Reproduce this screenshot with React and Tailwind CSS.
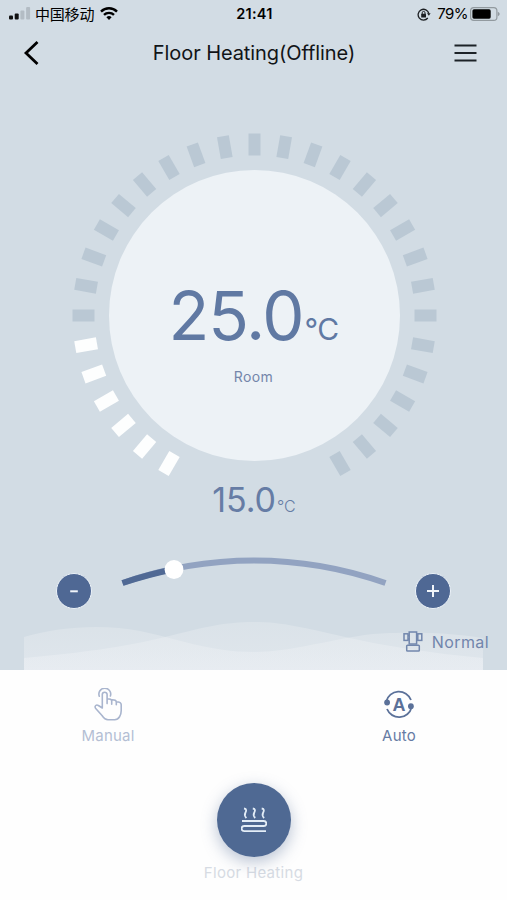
import React from 'react';

const ticks = Array.from({ length: 31 }, (_, i) => -150 + i * 10);

const StatusBar = () => (
    <div className="grid grid-cols-3 items-center h-7 pl-[9px] pr-[7px] text-black">
        <div className="flex items-center pb-px">
            <svg className="w-[22px] h-[13px]" viewBox="0 0 22 13">
                <rect x="0" y="8.5" width="4" height="4" rx="1" fill="#111" />
                <rect x="5.7" y="6.5" width="4" height="6" rx="1" fill="#111" />
                <rect x="11.4" y="3.5" width="4" height="9" rx="1" fill="#b3bcc4" />
                <rect x="17.1" y="0" width="4" height="12.5" rx="1" fill="#b3bcc4" />
            </svg>
            <span className="ml-1 text-[15px] leading-5 tracking-[-0.2px] whitespace-nowrap font-['Noto_Sans_CJK_SC',sans-serif]">中国移动</span>
            <svg className="ml-1.5 w-[18px] h-[13px] shrink-0" viewBox="0 0 18 13" fill="none" stroke="#000" strokeWidth="2.4">
                <path d="M1 4.6a11.3 11.3 0 0 1 16 0" />
                <path d="M4 7.9a7.1 7.1 0 0 1 10 0" />
                <path d="M9 13 6.4 10.2a3.7 3.7 0 0 1 5.2 0z" fill="#000" stroke="none" />
            </svg>
        </div>
        <div className="text-center text-[14.5px] font-semibold tracking-[0.3px]">21:41</div>
        <div className="flex items-center justify-end">
            <svg className="w-[14px] h-[13px]" viewBox="0 0 14 13" fill="none" stroke="#1c1f22" strokeWidth="1.3">
                <path d="M10.8 10a5.4 5.4 0 1 1 1-4.5" />
                <path d="M10 5.2h3.6l-1.7 2.6z" fill="#1c1f22" stroke="none" />
                <rect x="4.2" y="5.8" width="4.8" height="3.7" rx="0.5" fill="#1c1f22" stroke="none" />
                <path d="M5.2 6V4.8a1.4 1.4 0 0 1 2.8 0V6" strokeWidth="1" />
            </svg>
            <span className="ml-1.5 text-[15px] tracking-[-0.5px]">79%</span>
            <svg className="ml-[2px] mb-px w-[30px] h-[14px]" viewBox="0 0 30 14">
                <rect x="0.6" y="0.6" width="26.3" height="12.8" rx="3.2" fill="none" stroke="#929a9f" strokeWidth="1.2" />
                <rect x="2.4" y="2.3" width="18.3" height="9.4" rx="1.6" fill="#000" />
                <path d="M27.8 4.8c2.4.8 2.4 3.6 0 4.4z" fill="#929a9f" />
            </svg>
        </div>
    </div>
);

const Header = () => (
    <div className="flex items-center justify-between h-[50px] pl-[23px] pr-[30px]">
        <svg className="w-4 h-[26px] mb-px" viewBox="0 0 16 26" fill="none" stroke="#000" strokeWidth="2.8">
            <path d="M14.5 2 3 13l11.5 11" />
        </svg>
        <h1 className="ml-[15px] text-[20px] tracking-[-0.08px] text-[#111417]">Floor Heating(Offline)</h1>
        <svg className="w-[23px] h-[18px]" viewBox="0 0 23 18" stroke="#1c2227" strokeWidth="2">
            <path d="M0.5 1.5h22M0.5 9h22M0.5 16.5h22" />
        </svg>
    </div>
);

const Dial = () => (
    <div className="grid w-[366px] h-[366px] mt-[55px] mx-auto">
        <svg className="col-start-1 row-start-1 w-[366px] h-[366px]" viewBox="-183.5 -182.5 366 366">
            {ticks.map((deg) => (
                <rect
                    key={deg}
                    x="-6"
                    y="-182"
                    width="12"
                    height="22"
                    fill={deg < -90 ? '#fdfefe' : '#bac8d4'}
                    transform={`rotate(${deg})`}
                />
            ))}
            <circle r="145.5" fill="#edf2f6" />
        </svg>
        <div className="col-start-1 row-start-1 flex flex-col items-center pt-[142px]">
            <div className="flex items-baseline text-[#6079a3]">
                <span className="text-[67px] leading-[82px] font-normal tracking-[-1.2px]">25.0</span>
                <span className="ml-px text-[30px] font-[370] tracking-[-0.6px]">°C</span>
            </div>
            <span className="mt-[10px] text-[14px] leading-5 tracking-[0.4px] text-[#7486aa]">Room</span>
        </div>
    </div>
);

const RoundButton = ({ children }) => (
    <button className="flex items-center justify-center w-9 h-9 rounded-full border border-[#edf3f9] bg-[#4f6894]">
        <svg className="w-3 h-3" viewBox="0 0 12 12" stroke="#f1f5fa" strokeWidth="2">
            {children}
        </svg>
    </button>
);

const Slider = () => (
    <div className="flex items-start justify-between h-[65px] px-14 pt-[19px]">
        <div className="pt-[18px]">
            <RoundButton><path d="M2.2 6.3h7.6" /></RoundButton>
        </div>
        <svg className="w-[266px] h-10" viewBox="0 0 266 40" fill="none" strokeWidth="6">
            <path d="M1.5 28A395 395 0 0 1 264.5 28" stroke="#92a3c1" />
            <path d="M1.5 28A395 395 0 0 1 53 14.2" stroke="#506994" />
            <circle cx="53" cy="14.5" r="9.4" fill="#fff" />
        </svg>
        <div className="pt-[18px]">
            <RoundButton><path d="M0 6h12M6 0v12" /></RoundButton>
        </div>
    </div>
);

const Waves = () => (
    <svg className="col-start-1 row-start-1 w-[459px] h-[50px] ml-6 self-end" viewBox="24 620 459 50">
        <defs>
            <linearGradient id="wave" x1="0" y1="0" x2="0" y2="1">
                <stop offset="0" stopColor="#eef1f3" stopOpacity="0.32" />
                <stop offset="1" stopColor="#f2f4f8" stopOpacity="0.42" />
            </linearGradient>
        </defs>
        <path d="M24 637C60 626 105 624 140 631S210 652 254 652S345 634 390 633S455 634 483 638V670H24Z" fill="url(#wave)" />
        <path d="M24 658C80 653 125 647 165 637S225 622 254 622S305 628 345 637S430 653 483 658V670H24Z" fill="url(#wave)" />
    </svg>
);

const ValveIcon = () => (
    <svg className="w-5 h-[21px]" viewBox="0 0 20 21" fill="none" stroke="#7287ad" strokeWidth="1.5">
        <rect x="6.2" y="1" width="7.4" height="12" />
        <rect x="1" y="2.8" width="4" height="6.6" />
        <rect x="14.8" y="2.8" width="4" height="6.6" />
        <path d="M5 4.5h1.2M5 8h1.2M13.6 4.5h1.2M13.6 8h1.2" />
        <rect x="3.7" y="14.2" width="12.6" height="5.8" rx="0.8" />
    </svg>
);

const ManualIcon = () => (
    <svg className="w-[28px] h-[33px]" viewBox="0 0 28 33" fill="none" stroke="#a9b5ce" strokeWidth="1.6" strokeLinecap="round" strokeLinejoin="round">
        <path d="M8.3 20V6.6a2.4 2.4 0 0 1 4.8 0v9V10.7q4.6-.2 4.6 2.5v3V11.8q4.6-.2 4.6 2.5v2.5V13.8q4.9 0 4.9 3v6c0 4-2.2 8.9-6.5 8.9h-6.7c-2.5 0-4.5-2-6-4.2L1.500 20.2c-1.3-2.3 1-4 2.9-2.7z" />
        <path d="M5.3 8.2a5.9 5.9 0 1 1 11.1-.2" />
    </svg>
);

const AutoIcon = () => (
    <div className="grid place-items-center">
        <svg className="col-start-1 row-start-1 w-[30px] h-[29px]" viewBox="0 0 30 29" fill="none" stroke="#5b7199" strokeWidth="1.8">
            <path d="M2.2 11.5A13 13 0 0 1 27 10" />
            <path d="M27.6 17.5A13 13 0 0 1 3 19" />
            <circle cx="3.1" cy="12.5" r="2.9" fill="#5b7199" stroke="none" />
            <circle cx="26.9" cy="16.2" r="2.9" fill="#5b7199" stroke="none" />
        </svg>
        <span className="col-start-1 row-start-1 pt-px text-[18px] leading-none font-bold text-[#5b7199] font-['Liberation_Sans',sans-serif]">A</span>
    </div>
);

const HeatingIcon = () => (
    <svg className="w-[26px] h-[26px]" viewBox="0 0 26 26" fill="none" stroke="#e3edf7" strokeWidth="1.8">
        <path d="M3 1.5c3 .5 2.3 2.5 1.3 4.5s-.3 3.6 1.1 5" />
        <path d="M11.8 1.5c3 .5 2.3 2.5 1.3 4.5s-.3 3.6 1.1 5" />
        <path d="M20.7 1.5c3 .5 2.3 2.5 1.3 4.5s-.3 3.6 1.1 5" />
        <path d="M1 14h21.8a2.5 2.5 0 0 1 0 5H3.2a2.6 2.6 0 0 0 0 5.2H25" />
    </svg>
);

const App = () => {
    return (
        <div className="w-[507px] h-[900px] overflow-hidden bg-[#fefefe] font-['Inter',sans-serif]">
            <div className="flex flex-col h-[670px] bg-[#d2dce4]">
                <StatusBar />
                <Header />
                <Dial />
                <div className="flex items-baseline justify-center h-[43px] -mt-[21px] pl-px text-[#667ca5]">
                    <span className="text-[34px] leading-[43px] font-normal tracking-[-0.1px]">15.0</span>
                    <span className="ml-px text-[16px] font-[350]">°C</span>
                </div>
                <div className="mt-[15px]">
                    <Slider />
                </div>
                <div className="grid flex-1">
                    <Waves />
                    <div className="col-start-1 row-start-1 flex items-end justify-end pr-[18px] pb-[18px] text-[#7185ac]">
                        <div className="flex items-center gap-[9px]">
                            <ValveIcon />
                            <span className="text-[16px] leading-5 tracking-[0.4px]">Normal</span>
                        </div>
                    </div>
                </div>
            </div>

            <div className="flex justify-between px-[58px] pt-[18px]">
                <div className="flex flex-col items-center w-[100px] text-[#b4bfd4]">
                    <ManualIcon />
                    <span className="mt-[5px] text-[15px] leading-5 tracking-[0.2px]">Manual</span>
                </div>
                <div className="flex flex-col items-center w-[100px] text-[#667ba4]">
                    <div className="flex items-center h-[33px]">
                        <AutoIcon />
                    </div>
                    <span className="mt-[5px] text-[15px] leading-5 tracking-[0.2px]">Auto</span>
                </div>
            </div>

            <div className="flex flex-col items-center mt-[37px]">
                <button className="relative flex items-center justify-center w-[74px] h-[74px] rounded-full bg-[#4f6993] shadow-[0_5px_16px_rgba(79,105,147,0.4)]">
                    <HeatingIcon />
                </button>
                <span className="mt-[6px] text-[15px] leading-5 tracking-[0.3px] text-[#d6dbe3]">Floor Heating</span>
            </div>
        </div>
    );
};

export default App;
